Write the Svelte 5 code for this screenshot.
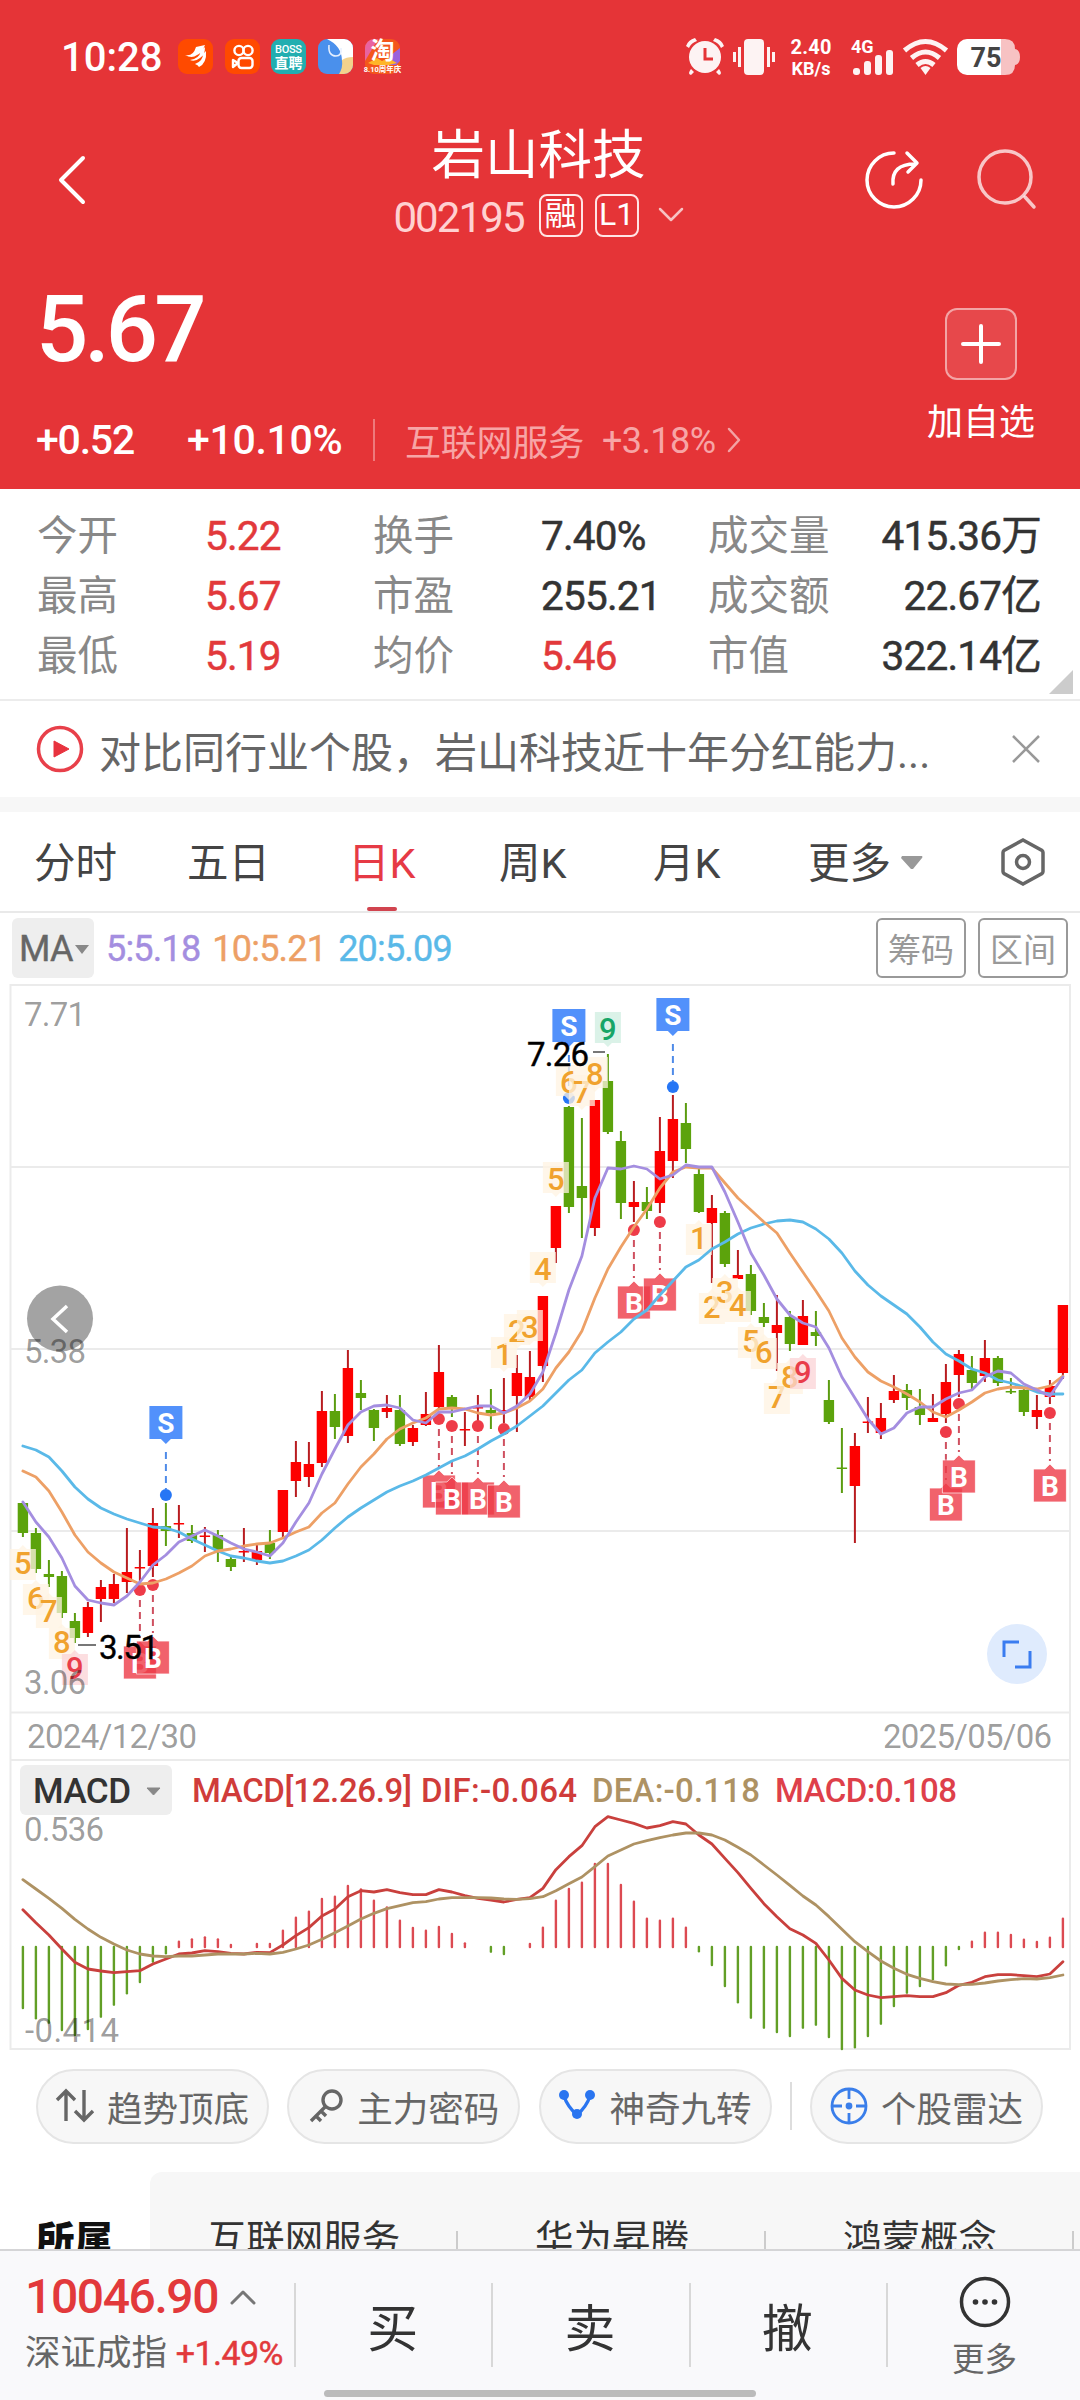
<script lang="ts">
	type Candle = [string, number, number, number, number];

	const stats = [
		['今开', '5.22', '换手', '7.40%', '成交量', '415.36万'],
		['最高', '5.67', '市盈', '255.21', '成交额', '22.67亿'],
		['最低', '5.19', '均价', '5.46', '市值', '322.14亿']
	];

	const tabs = ['分时', '五日', '日K', '周K', '月K', '更多'];
	const concepts = ['互联网服务', '华为昇腾', '鸿蒙概念'];

	// direction, body top, body bottom, wick top, wick bottom
	const candles: Candle[] = [
		['g', 1503, 1533, 1503, 1537], ['g', 1533, 1569, 1528, 1573], ['g', 1574, 1577, 1560, 1587],
		['g', 1576, 1613, 1571, 1618], ['g', 1621, 1638, 1613, 1643], ['r', 1607, 1633, 1602, 1637],
		['r', 1587, 1599, 1580, 1622], ['r', 1584, 1599, 1574, 1603], ['r', 1572, 1582, 1528, 1593],
		['r', 1567, 1568.5, 1550, 1590], ['r', 1523, 1566, 1508, 1577], ['g', 1526, 1531, 1503, 1546],
		['r', 1523, 1524.5, 1505, 1538], ['g', 1533, 1541, 1525, 1543], ['r', 1535.5, 1537, 1527, 1552],
		['g', 1535, 1550, 1530, 1562], ['g', 1559, 1567, 1557, 1571], ['r', 1551, 1552.5, 1528, 1562],
		['r', 1551, 1560, 1543, 1565], ['g', 1543, 1553, 1530, 1559], ['r', 1490, 1532, 1490, 1537],
		['r', 1462, 1481, 1441, 1497], ['r', 1464, 1477, 1442, 1487], ['r', 1411, 1463, 1391, 1467],
		['g', 1411, 1427, 1394, 1439], ['r', 1368, 1436, 1350, 1443], ['g', 1393, 1398, 1380, 1410],
		['g', 1410, 1428, 1409, 1441], ['r', 1408, 1412, 1395, 1418], ['g', 1410, 1444, 1395, 1446],
		['r', 1428, 1442, 1425, 1446], ['r', 1414, 1425, 1392, 1426], ['r', 1372, 1407, 1345, 1410],
		['g', 1397, 1408, 1395, 1417], ['r', 1429, 1430.5, 1412, 1446], ['r', 1407, 1408.5, 1395, 1423],
		['g', 1410, 1413, 1389, 1429], ['r', 1410, 1411.5, 1378, 1423], ['r', 1373, 1396, 1355, 1432],
		['r', 1377, 1397, 1351, 1400], ['r', 1296, 1366, 1296, 1382], ['r', 1206, 1248, 1206, 1263],
		['g', 1107, 1207, 1106, 1213], ['g', 1186, 1198, 1118, 1238], ['r', 1100, 1228, 1100, 1236],
		['g', 1081, 1132, 1054, 1134], ['g', 1141, 1203, 1131, 1219], ['r', 1202, 1207, 1181, 1222],
		['g', 1202, 1211, 1187, 1219], ['r', 1151, 1203, 1117, 1213], ['r', 1119, 1161, 1095, 1178],
		['g', 1123, 1149, 1103, 1163], ['g', 1174, 1212, 1168, 1213], ['r', 1208, 1223, 1195, 1283],
		['g', 1213, 1264, 1211, 1267], ['r', 1275, 1279, 1250, 1279], ['g', 1274, 1311, 1265, 1315],
		['g', 1317, 1323, 1303, 1327], ['r', 1325, 1333, 1295, 1371], ['g', 1317, 1344, 1311, 1351],
		['r', 1316, 1345, 1300, 1345], ['g', 1332, 1336, 1311, 1346], ['g', 1400, 1422, 1380, 1424],
		['g', 1467.5, 1469, 1428, 1493], ['r', 1446, 1486, 1433, 1543], ['r', 1421.5, 1423, 1397, 1433],
		['r', 1418, 1433, 1403, 1439], ['r', 1391, 1400, 1375, 1403], ['g', 1390, 1398, 1384, 1410],
		['g', 1407, 1415, 1389, 1425], ['r', 1418, 1422, 1394, 1422], ['r', 1382, 1414, 1364, 1423],
		['r', 1354, 1375, 1350, 1397], ['g', 1370, 1383, 1356, 1389], ['r', 1358, 1376, 1340, 1382],
		['g', 1358, 1383, 1356, 1386], ['g', 1391, 1392.5, 1378, 1394], ['g', 1390, 1412, 1388, 1416],
		['r', 1410, 1417, 1395, 1429], ['r', 1386, 1397, 1380, 1404], ['r', 1305, 1373, 1305, 1379]
	];

	const ma5 = [
		1502, 1522, 1537, 1558, 1586, 1600, 1603, 1605, 1596, 1582, 1565, 1555, 1542, 1536, 1530, 1536,
		1543, 1549, 1552, 1556, 1543, 1522, 1503, 1474, 1449, 1425, 1412, 1406, 1405, 1408, 1420, 1423,
		1412, 1412, 1409, 1406, 1406, 1413, 1406, 1394, 1372, 1333, 1290, 1256, 1198, 1168, 1169, 1166,
		1169, 1179, 1175, 1165, 1167, 1167, 1192, 1222, 1253, 1275, 1299, 1315, 1323, 1327, 1348, 1377,
		1398, 1419, 1434, 1428, 1413, 1407, 1407, 1399, 1393, 1390, 1377, 1371, 1373, 1384, 1390, 1396,
		1377
	];
	const ma10 = [
		1471, 1477, 1491, 1512, 1535, 1552, 1563, 1572, 1578, 1584, 1583, 1579, 1573, 1566, 1556, 1551,
		1549, 1546, 1544, 1543, 1538, 1532, 1527, 1513, 1503, 1484, 1467, 1454, 1439, 1429, 1423, 1418,
		1409, 1408, 1409, 1413, 1415, 1413, 1408, 1401, 1389, 1368, 1352, 1331, 1298, 1269, 1247, 1227,
		1209, 1188, 1172, 1167, 1168, 1168, 1183, 1198, 1210, 1222, 1233, 1253, 1272, 1291, 1311, 1338,
		1357, 1372, 1381, 1387, 1394, 1402, 1412, 1417, 1410, 1402, 1393, 1389, 1387, 1388, 1389, 1386,
		1376
	];
	const ma20 = [
		1446, 1450, 1457, 1471, 1487, 1499, 1508, 1514, 1519, 1523, 1527, 1528, 1532, 1539, 1545, 1551,
		1556, 1558, 1561, 1563, 1561, 1556, 1550, 1540, 1528, 1517, 1508, 1500, 1492, 1486, 1481, 1475,
		1468, 1461, 1456, 1449, 1441, 1434, 1426, 1416, 1406, 1393, 1380, 1370, 1353, 1342, 1332, 1319,
		1310, 1295, 1281, 1267, 1260, 1249, 1242, 1234, 1228, 1224, 1221, 1220, 1222, 1229, 1239, 1253,
		1271, 1285, 1296, 1305, 1314, 1327, 1342, 1354, 1361, 1369, 1373, 1380, 1383, 1387, 1392, 1394,
		1394
	];

	// nine-turn counters: index, digit, centre y, kind
	const turns: [number, number, number, string][] = [
		[0, 5, 1563, 'o'], [1, 6, 1598, 'o'], [2, 7, 1611, 'o'], [3, 8, 1642, 'o'], [4, 9, 1668, 'r'],
		[37, 1, 1354, 'o'], [38, 2, 1331, 'o'], [39, 3, 1327, 'o'], [40, 4, 1269, 'o'], [41, 5, 1179, 'o'],
		[42, 6, 1082, 'o'], [43, 7, 1092, 'o'], [44, 8, 1074, 'o'], [45, 9, 1029, 'n'],
		[52, 1, 1238, 'o'], [53, 2, 1307, 'o'], [54, 3, 1292, 'o'], [55, 4, 1305, 'o'], [56, 5, 1341, 'o'],
		[57, 6, 1352, 'o'], [58, 7, 1397, 'o'], [59, 8, 1377, 'o'], [60, 9, 1372, 'r']
	];

	const buys = [[9, 1590], [10, 1585], [32, 1419], [33, 1426], [35, 1426], [37, 1429], [47, 1230], [49, 1222], [71, 1432], [72, 1404], [79, 1413]];
	const sells = [[11, 1495], [42, 1098], [50, 1087]];

	const bars = [
		924, 955, 968, 990, 1005, 987, 950, 914, 880, 846, 785, 760, 725, 718, 712, 718, 735, 0, 732, 732,
		692, 653, 635, 597, 590, 558, 568, 602, 622, 662, 684, 692, 681, 702, 730, 0, 755, 762, 0, 732,
		683, 602, 567, 548, 492, 492, 555, 605, 656, 662, 656, 683, 754, 795, 858, 907, 953, 983, 996, 1008,
		983, 974, 1011, 1047, 1042, 1008, 971, 918, 878, 858, 838, 796, 747, 725, 698, 698, 705, 719, 726,
		713, 656
	];
	const dif = [
		629, 668, 705, 747, 787, 807, 813, 818, 815, 812, 792, 777, 762, 759, 752, 755, 760, 762, 757, 758,
		735, 707, 683, 648, 627, 590, 572, 576, 569, 578, 584, 584, 569, 576, 587, 595, 600, 606, 598, 593,
		565, 509, 470, 437, 380, 350, 360, 370, 384, 377, 365, 372, 405, 432, 475, 518, 565, 611, 650, 686,
		705, 730, 780, 835, 870, 885, 893, 890, 887, 890, 890, 878, 856, 847, 830, 824, 824, 827, 830, 822,
		785
	];
	const dea = [
		539, 567, 595, 625, 658, 687, 712, 732, 750, 762, 768, 770, 768, 768, 765, 762, 762, 762, 760, 762,
		757, 747, 735, 718, 698, 678, 657, 640, 626, 617, 608, 605, 597, 593, 593, 593, 594, 597, 598, 596,
		590, 572, 551, 531, 500, 468, 450, 432, 422, 413, 405, 399, 399, 405, 420, 442, 465, 495, 525, 556,
		588, 615, 650, 688, 725, 755, 783, 805, 823, 835, 845, 852, 854, 853, 849, 843, 839, 836, 837, 833,
		825
	];

	const x = (i: number) => 22.9 + 13 * i;
	const my = (v: number) => 1700 + v / 3;
	const line = (ys: number[]) => ys.map((y, i) => `${x(i)},${y}`).join(' ');
	const macdLine = (vs: number[]) => line(vs.map(my));
</script>

<div class="screen">
	<header>
		<div class="status">
			<b class="clock">10:28</b>
			<svg class="apps" width="222" height="36" viewBox="0 0 222 36">
				<rect width="35" height="35" rx="9" fill="#ff4a00" />
				<path d="M7 16q8 2 11-8l9-2q-3 8-8 10-5 4-12 0Z M12 21q9-1 11-9l4-4q0 8-5 11-5 4-10 2Z M17 25q8-3 8-10l3-3q1 12-7 16-1-2-4-3Z" fill="#fff" />
				<rect x="47" width="35" height="35" rx="9" fill="#ff4a00" />
				<g fill="none" stroke="#fff" stroke-width="2.4">
					<circle cx="61" cy="11.500" r="4.600" /><circle cx="70" cy="11.500" r="4.600" />
					<rect x="60.500" y="19" width="14" height="10" rx="3" /><path d="M60 24l-5-3v7Z" stroke-linejoin="round" />
				</g>
				<rect x="93" width="35" height="35" rx="9" fill="#22aeb0" />
				<text x="110.500" y="14" text-anchor="middle" font-size="11" font-weight="500" textLength="27" fill="#fff">BOSS</text>
				<text x="110.500" y="29" text-anchor="middle" font-size="14" font-weight="700" fill="#fff">直聘</text>
				<rect x="140" width="35" height="35" rx="9" fill="#4a90ec" />
				<path d="M149 0h17a9 9 0 0 1 9 9v10q-7 0-11 3 0-15-15-22Z" fill="#fff" />
				<path d="M175 18v8a9 9 0 0 1-9 9h-5q4-6 3-14 4-3 11-3Z" fill="#f3d28c" />
				<path d="M151 6q-1 11 7 11 6 0 5-8" fill="none" stroke="#e6f0ff" stroke-width="1.500" />
				<rect x="187" width="35" height="35" rx="9" fill="#f4561c" />
				<path d="M187 9a9 9 0 0 1 9-9h4l-13 22Z" fill="#e864a1" /><path d="M213 16l9-7v13l-4 4h-12Z" fill="#9a63dc" />
				<path d="M190 24l9-5 5 3 6-3 9 5-8 2h-15Z" fill="#ffb629" />
				<text x="204.500" y="20" text-anchor="middle" font-size="24" font-weight="700" fill="#fff">淘</text>
				<text x="204.500" y="33" text-anchor="middle" font-size="7.500" font-weight="700" fill="#fff">8.10周年庆</text>
			</svg>
			<svg class="signals" width="336" height="40" viewBox="686 37 336 40">
				<g fill="#fff" opacity=".94">
					<circle cx="705" cy="57" r="16" />
					<path d="M686 46q2-6 9-8l2 3q-6 2-8 7Z M724 46q-2-6-9-8l-2 3q6 2 8 7Z M691 69l3 3-3 3q-4-1 0-6Z M719 69l-3 3 3 3q4-1 0-6Z" />
					<rect x="744" y="39" width="20" height="36" rx="4" />
					<path d="M733 52h3v10h-3Z M738 47h3v20h-3Z M767 47h3v20h-3Z M772 52h3v10h-3Z" />
					<rect x="853" y="68" width="7" height="7" rx="3" /><rect x="864" y="61" width="7" height="14" rx="3" />
					<rect x="875" y="55" width="7" height="20" rx="3" /><rect x="886" y="50" width="7" height="25" rx="3" />
					<path d="M925.500 75l-5-7q5-4 10 0Z" />
				</g>
				<path d="M705 48v11h8" fill="none" stroke="#e53437" stroke-width="3" />
				<g fill="none" stroke="#fff" stroke-width="5" opacity=".94">
					<path d="M904.500 50.500q21-18 42 0M911.500 58q14-12 28 0M917 65q8.500-7 17 0" />
				</g>
				<g fill="#fff" font-size="20" font-weight="700">
					<text x="811" y="54" text-anchor="middle" textLength="41">2.40</text>
					<text x="811" y="75" text-anchor="middle" font-size="18">KB/s</text>
					<text x="851" y="53" font-size="18">4G</text>
				</g>
				<path d="M967 39h34v36h-34a10 10 0 0 1-10-10V49a10 10 0 0 1 10-10Z" fill="#fff" />
				<path d="M1001 39h4q10 0 10 10 5 1 5 8t-5 8q0 10-10 10h-4Z" fill="#fff" opacity=".7" />
				<text x="986" y="66.500" text-anchor="middle" font-size="27" font-weight="700" fill="#444">75</text>
			</svg>
		</div>

		<nav>
			<svg class="back" width="30" height="52" viewBox="0 0 30 52"><path d="M26 4 4 26l22 22" /></svg>
			<div class="name">
				<h1>岩山科技</h1>
				<p>
					<span class="code">002195</span><i>融</i><i>L1</i>
					<svg width="26" height="16" viewBox="0 0 26 16"><path d="M2 2l11 11L24 2" /></svg>
				</p>
			</div>
			<svg class="nav-icons" width="176" height="64" viewBox="862 148 176 64">
				<path d="M894 153a27 27 0 1 0 27 27M893 184c-1-13 6-20 22-20M907 153l10 10-9 9" />
				<circle cx="1005" cy="177" r="26" opacity=".72" /><path d="M1025 197l9 10" opacity=".72" />
			</svg>
		</nav>

		<div class="quote">
			<div>
				<strong class="price">5.67</strong>
				<div class="change">
					<b>+0.52</b><b>+10.10%</b>
					<div class="sector">互联网服务 <span>+3.18%</span>
						<svg width="14" height="26" viewBox="0 0 14 26"><path d="M2 2l10 11L2 24" /></svg>
					</div>
				</div>
			</div>
			<div class="watch">
				<button aria-label="加自选"><svg width="36" height="36" viewBox="0 0 36 36"><path d="M18 0v36M0 18h36" /></svg></button>
				<span>加自选</span>
			</div>
		</div>
	</header>

	<section class="stats">
		{#each stats as row, r}
			{#each row as cell, c}
				<span class:value={c % 2 === 1} class:up={c === 1 || (r === 2 && c === 3)}>{cell}</span>
			{/each}
		{/each}
		<svg class="corner" width="24" height="24"><path d="M24 0v24H0Z" fill="#ccc" /></svg>
	</section>

	<section class="notice">
		<svg width="48" height="48" viewBox="0 0 48 48">
			<circle cx="24" cy="24" r="21.500" fill="none" stroke="#e8404a" stroke-width="3.500" />
			<path d="M18 16v16l15-8Z" fill="#e8333e" stroke="#e8333e" stroke-linejoin="round" />
		</svg>
		<p>对比同行业个股，岩山科技近十年分红能力...</p>
		<svg width="28" height="28" viewBox="0 0 28 28"><path d="M1 1l26 26M27 1 1 27" stroke="#999" stroke-width="2.500" /></svg>
	</section>

	<section class="tabs">
		{#each tabs as tab}
			<span class:active={tab === '日K'}>{tab}</span>
		{/each}
		<svg class="caret" width="22" height="14"><path d="M1 0h20q1 1 0 2L12 13h-2L0 2Z" fill="#999" /></svg>
		<svg class="gear" width="44" height="48" viewBox="0 0 44 48">
			<path d="M22 2 41 12.500q1 1 1 2v19q0 1-1 2L22 46 3 35.500q-1-1-1-2v-19q0-1 1-2Z" /><circle cx="22" cy="24" r="6.500" />
		</svg>
	</section>

	<section class="ma">
		<span class="pill">MA<svg width="14" height="9"><path d="M0 0h14L7 9Z" fill="#888" /></svg></span>
		<span class="m5">5:5.18</span><span class="m10">10:5.21</span><span class="m20">20:5.09</span>
		<button>筹码</button><button>区间</button>
	</section>

	<div class="chart">
		<svg width="1080" height="1080" viewBox="0 983 1080 1080">
			<g stroke="#ebebeb" stroke-width="2" fill="none">
				<rect x="10.500" y="985" width="1059.500" height="1064" />
				<path d="M10 1167H1070M10 1349H1070M10 1531H1070M10 1712.500H1070M10 1760H1070" />
			</g>

			<circle cx="60" cy="1318.500" r="33" fill="#a3a3a3" />
			<path d="M67 1306l-14 13 14 13" fill="none" stroke="#fff" stroke-width="3.500" />

			{#each candles as [dir, top, bottom, high, low], i}
				<path class="wick {dir}" d="M{x(i)} {high}V{low}" />
				<rect class="body {dir}" x={x(i) - 5.2} y={top} width="10.4" height={bottom - top} />
			{/each}

			{#each sells as [i, y]}
				<g transform="translate({x(i)} {y})">
					<path d="M0 -43V-6" stroke="#4f8be8" stroke-width="2" stroke-dasharray="7 5" />
					<circle r="6" fill="#2676f5" />
					<path d="M-16.500 -89h33v33H5l-5 5-5-5h-11.500Z" fill="#5291fb" />
					<text class="flag" y="-62">S</text>
				</g>
			{/each}

			{#each turns as [i, digit, y, kind]}
				<g transform="translate({x(i)} {y})" class="turn {kind}">
					<path d={kind === 'r' || y > 1200 && i > 50 || i < 5 ? 'M-13 -14h9l4-4 4 4h9v31h-26Z' : 'M-13 -17h26v31H4l-4 4-4-4h-9Z'} />
					<text y="11">{digit}</text>
				</g>
			{/each}

			{#each buys as [i, y]}
				<g transform="translate({x(i)} {y})">
					<path d="M0 10V48" stroke="#cf5060" stroke-width="2" stroke-dasharray="7 5" />
					<circle r="6" fill="#ee3b48" />
					<path d="M-16.500 56H-5l5-5 5 5h11.500v33h-33Z" fill="#ee3b48" stroke="#fff" stroke-width=".8" opacity=".8" />
					<text class="flag" y="83">B</text>
				</g>
			{/each}

			<g class="lines">
				<polyline points={line(ma20)} stroke="#5ab9e8" />
				<polyline points={line(ma10)} stroke="#eda066" />
				<polyline points={line(ma5)} stroke="#a48ee0" />
			</g>

			<path d="M593 1052h12M78 1645h18" stroke="#777" stroke-width="2" />
			<text class="peak" x="527" y="1066" textLength="62">7.26</text>
			<text class="peak" x="99" y="1659" textLength="60">3.51</text>

			<circle cx="1017" cy="1654" r="30" fill="#dfebfd" />
			<path d="M1004 1657v-15h15M1030 1651v16h-15" fill="none" stroke="#3a7cf0" stroke-width="3" />

			{#each bars as v, i}
				{#if v}
					<path d="M{x(i)} 1947V{my(v)}" stroke={v > 742 ? '#629f26' : '#dc4a52'} stroke-width="2.400" stroke-linecap="round" />
				{/if}
			{/each}
			<g class="lines">
				<polyline points={macdLine(dif)} stroke="#c9403d" />
				<polyline points={macdLine(dea)} stroke="#ae9263" />
			</g>

			<rect x="20" y="1765" width="152" height="50" rx="6" fill="#eee" />
			<text x="33" y="1803" textLength="98" font-size="35" font-weight="500" fill="#333">MACD</text>
			<path d="M147 1788h13l-6.500 7Z" fill="#888" stroke="#888" stroke-linejoin="round" />
			<g class="legend">
				<text x="192" y="1802" textLength="220" fill="#d03c3a">MACD[12.26.9]</text>
				<text x="421" y="1802" textLength="156" fill="#d03c3a">DIF:-0.064</text>
				<text x="592" y="1802" textLength="168" fill="#ae9263">DEA:-0.118</text>
				<text x="775" y="1802" textLength="182" fill="#de404a">MACD:0.108</text>
			</g>
			<g class="axis">
				<text x="24" y="1026" textLength="62">7.71</text>
				<text x="24" y="1363" textLength="62">5.38</text>
				<text x="24" y="1694" textLength="62">3.06</text>
				<text x="27" y="1748" textLength="170">2024/12/30</text>
				<text x="883" y="1748" textLength="169">2025/05/06</text>
				<text x="24" y="1841" textLength="80">0.536</text>
				<text x="25" y="2042" textLength="94">-0.414</text>
			</g>
		</svg>
	</div>

	<section class="chips">
		<span>
			<svg width="38" height="34" viewBox="0 0 38 34" stroke="#666" stroke-width="3.400"><path d="M10 32V3M1 11l9-9 9 9M28 1v30M19 22l9 9 9-9" /></svg>趋势顶底
		</span>
		<span>
			<svg width="36" height="36" viewBox="0 0 36 36" stroke="#666" stroke-width="3.400"><circle cx="24" cy="12" r="9" /><path d="M18 18 3 33M8 28l5 5M13 23l5 5" /></svg>主力密码
		</span>
		<span>
			<svg width="38" height="34" viewBox="0 0 38 34" stroke="#2a75f0" stroke-width="3.200"><path d="M6 7q3 10 13 19Q29 17 32 7" /><g fill="#2a75f0" stroke="none"><circle cx="6" cy="6" r="5" /><circle cx="32" cy="6" r="5" /><circle cx="19" cy="25" r="5" /></g></svg>神奇九转
		</span>
		<hr />
		<span>
			<svg width="38" height="38" viewBox="0 0 38 38" stroke="#3a7eea" stroke-width="2.800"><circle cx="19" cy="19" r="17" /><path d="M19 2v10M19 26v10M2 19h10M26 19h10" /><circle cx="19" cy="19" r="2" fill="#3a7eea" /></svg>个股雷达
		</span>
	</section>

	<section class="belongs">
		<b>所属</b>
		<div>
			{#each concepts as concept}
				<span>{concept}</span>
			{/each}
		</div>
	</section>

	<footer>
		<div class="index">
			<p class="points">10046.90 <svg width="26" height="15" viewBox="0 0 26 15"><path d="M2 13 13 2l11 11" /></svg></p>
			<p>深证成指 <em>+1.49%</em></p>
		</div>
		<span>买</span>
		<span>卖</span>
		<span>撤</span>
		<div class="more">
			<svg width="52" height="52" viewBox="0 0 52 52">
				<circle cx="26" cy="26" r="23.500" fill="none" stroke="#333" stroke-width="3.500" />
				<g fill="#333"><circle cx="16.500" cy="26" r="2.800" /><circle cx="26" cy="26" r="2.800" /><circle cx="35.500" cy="26" r="2.800" /></g>
			</svg>
			更多
		</div>
		<i class="home"></i>
	</footer>
</div>

<style>
	:global(body) {
		margin: 0;
		background: #fff;
	}

	.screen {
		width: 1080px;
		height: 2400px;
		overflow: hidden;
		display: flex;
		flex-direction: column;
		font-family: Roboto, 'Noto Sans CJK SC', sans-serif;
		color: #333;
		background: #fff;
	}

	.screen * {
		box-sizing: border-box;
	}

	.screen > * {
		flex-shrink: 0;
	}

	h1,
	p {
		margin: 0;
		font-weight: 400;
	}

	button {
		font: inherit;
		padding: 0;
	}

	svg {
		display: block;
		fill: none;
		flex-shrink: 0;
		overflow: visible;
	}

	header {
		height: 489px;
		background: #e53437;
		color: #fff;
	}

	.status {
		display: flex;
		align-items: center;
		height: 114px;
		padding: 0 58px 0 61px;
	}

	.clock {
		width: 117px;
		font-size: 40px;
		font-weight: 500;
	}

	.signals {
		margin-left: auto;
	}

	nav {
		display: flex;
		height: 136px;
		padding: 0 42px 0 57px;
		position: relative;
		justify-content: space-between;
	}

	nav svg,
	.sector svg,
	.watch svg,
	.index svg {
		stroke: #fff;
		stroke-width: 3;
		stroke-linecap: round;
		stroke-linejoin: round;
	}

	.back {
		margin-top: 40px;
		stroke-width: 4;
	}

	.name {
		width: 300px;
		margin-left: 128px;
	}

	.name h1 {
		font-size: 53.5px;
		line-height: 84px;
		text-align: center;
		white-space: nowrap;
	}

	.name p {
		display: flex;
		align-items: center;
		justify-content: center;
		height: 34px;
	}

	.name p svg {
		margin-left: 19px;
		opacity: 0.7;
		stroke-width: 2.5;
	}

	.code {
		font-size: 42px;
		letter-spacing: -1.9px;
		color: #ffd1d1;
		margin: 4px 3px 0 0;
	}

	.name i {
		width: 44px;
		height: 43px;
		margin-left: 12px;
		border: 2.5px solid #ffe5e5;
		border-radius: 8px;
		font-size: 32px;
		line-height: 37px;
		text-align: center;
		font-style: normal;
	}

	.nav-icons {
		margin-top: 34px;
		stroke-width: 3.5;
	}

	.quote {
		display: flex;
		justify-content: space-between;
		padding: 25px 45px 0 36px;
	}

	.price {
		display: block;
		font-size: 92px;
		font-weight: 500;
		letter-spacing: -4px;
		line-height: 110px;
	}

	.change {
		display: flex;
		align-items: center;
		height: 44px;
		margin-top: 33px;
		font-size: 41px;
		letter-spacing: -1.2px;
	}

	.change b {
		font-weight: 500;
		width: 151px;
	}

	.change b + b {
		width: 186px;
		letter-spacing: -0.3px;
	}

	.sector {
		display: flex;
		align-items: center;
		border-left: 2px solid rgba(255, 255, 255, 0.35);
		padding-left: 30px;
		height: 42px;
		font-size: 36px;
		letter-spacing: -0.2px;
		color: #f7a5a6;
	}

	.sector span {
		margin: 2px 12px 0 18px;
		letter-spacing: -0.6px;
	}

	.sector svg {
		opacity: 0.55;
		stroke-width: 2.5;
	}

	.watch {
		display: flex;
		flex-direction: column;
		align-items: center;
		padding-top: 33px;
		font-size: 36px;
		line-height: 50px;
	}

	.watch button {
		display: grid;
		place-items: center;
		width: 72px;
		height: 72px;
		margin-bottom: 18px;
		background: rgba(255, 255, 255, 0.1);
		border: 2px solid rgba(255, 255, 255, 0.5);
		border-radius: 12px;
	}

	.watch svg {
		stroke-width: 4;
	}

	.stats {
		position: relative;
		display: grid;
		grid-template-columns: 168px 168px 168px 167px 121px 1fr;
		grid-auto-rows: 60px;
		height: 212px;
		padding: 17px 39px 0 37px;
		border-bottom: 2px solid #ececec;
		font-size: 40.5px;
		line-height: 60px;
		color: #888;
		white-space: nowrap;
	}

	.stats .value {
		color: #333;
		letter-spacing: -0.8px;
		-webkit-text-stroke: 0.5px currentColor;
	}

	.stats .value:nth-child(6n) {
		text-align: right;
	}

	.stats .value.up {
		color: #e2393b;
	}

	.corner {
		position: absolute;
		right: 7px;
		bottom: 5px;
	}

	.notice {
		display: flex;
		align-items: center;
		height: 111px;
		padding: 0 40px 0 36px;
		border-bottom: 15px solid #f7f7f7;
		font-size: 42px;
		line-height: 60px;
		color: #666;
	}

	.notice p {
		margin: 9px auto 0 15px;
		white-space: nowrap;
	}

	.tabs {
		display: grid;
		grid-template-columns: 153px 161px 151px 154px 155px 93px 22px 1fr;
		align-items: center;
		height: 101px;
		padding: 0 35px 0 34px;
		border-bottom: 2px solid #e9e9e9;
		font-size: 41.5px;
		color: #444;
	}

	.tabs span {
		position: relative;
		line-height: 98px;
		height: 99px;
		padding-top: 3px;
	}

	.tabs .active {
		color: #e63a45;
	}

	.active::after {
		content: '';
		position: absolute;
		left: 19px;
		bottom: 0;
		width: 30px;
		height: 4px;
		border-radius: 2px;
		background: #d1444f;
	}

	.caret {
		margin-top: 3px;
	}

	.gear {
		justify-self: end;
		stroke: #666;
		stroke-width: 3.5;
	}

	.ma {
		display: flex;
		align-items: center;
		height: 70px;
		padding: 0 12px;
		gap: 12px;
		font-size: 36px;
		letter-spacing: -0.8px;
	}

	.ma span {
		padding-top: 2px;
		-webkit-text-stroke: 0.4px currentColor;
	}

	.ma .pill {
		display: flex;
		align-items: center;
		width: 82px;
		height: 60px;
		padding-left: 7px;
		border-radius: 6px;
		background: #eee;
		color: #666;
	}

	.pill svg {
		margin-left: 2px;
	}

	.m5 {
		color: #a48ee0;
	}

	.m10 {
		color: #eda066;
	}

	.m20 {
		color: #5ab9e8;
	}

	.ma button {
		width: 90px;
		height: 60px;
		border: 2px solid #999;
		border-radius: 6px;
		background: #fff;
		color: #999;
		font-size: 33px;
	}

	.m20 + button {
		margin-left: auto;
	}

	.chart {
		height: 1080px;
	}

	.axis {
		font-size: 33px;
		fill: rgba(0, 0, 0, 0.4);
	}

	.wick {
		stroke-width: 2;
	}

	.wick.r {
		stroke: #b81c20;
	}

	.wick.g {
		stroke: #5b9c10;
	}

	.body.r {
		fill: #fd0000;
	}

	.body.g {
		fill: #5ca30c;
	}

	.flag {
		font-size: 28px;
		font-weight: 700;
		fill: #fff;
		text-anchor: middle;
	}

	.turn text {
		font-size: 31px;
		font-weight: 500;
		text-anchor: middle;
		fill: #f0a22e;
	}

	.turn path {
		fill: #fff3e2;
		opacity: 0.75;
	}

	.turn.r text {
		fill: #e93d4a;
	}

	.turn.r path {
		fill: #fbd3d6;
	}

	.turn.n text {
		fill: #17a567;
	}

	.turn.n path {
		fill: #cfeee0;
	}

	.lines {
		fill: none;
		stroke-width: 2.8;
		stroke-linejoin: round;
		stroke-linecap: round;
	}

	.peak {
		font-size: 33px;
		fill: #000;
		stroke: #000;
		stroke-width: 0.4;
	}

	.legend {
		font-size: 33px;
		font-weight: 500;
	}

	.chips {
		display: flex;
		align-items: center;
		justify-content: space-between;
		height: 86px;
		padding: 0 37px 0 36px;
		font-size: 35.5px;
		color: #666;
	}

	.chips span {
		display: flex;
		align-items: center;
		justify-content: center;
		gap: 13px;
		width: 233px;
		height: 75px;
		border: 2px solid #e5e5e5;
		border-radius: 38px;
		background: #f7f7f7;
		white-space: nowrap;
	}

	.chips hr {
		width: 2px;
		height: 48px;
		margin: 0;
		border: 0;
		background: #ddd;
	}

	.belongs {
		display: flex;
		height: 77px;
		margin-top: 23px;
		overflow: hidden;
		font-size: 38.5px;
		line-height: 56px;
	}

	.belongs b {
		width: 150px;
		padding: 41px 0 0 36px;
		font-weight: 900;
		color: #111;
	}

	.belongs div {
		display: flex;
		flex: 1;
		background: #f7f7f7;
		border-top-left-radius: 12px;
	}

	.belongs div span {
		flex: 0 0 308px;
		padding-top: 40px;
		text-align: center;
		background: linear-gradient(#ccc, #ccc) right 59px / 2px 60px no-repeat;
	}

	footer {
		position: relative;
		display: flex;
		height: 151px;
		border-top: 2px solid #d5d5d7;
		background: #f9f9fb;
	}

	.index {
		flex: 0 0 294px;
		padding: 18px 0 0 25px;
		font-size: 35.5px;
		line-height: 56px;
		color: #666;
		white-space: nowrap;
	}

	.index .points {
		display: flex;
		align-items: center;
		height: 56px;
		font-size: 48px;
		font-weight: 500;
		letter-spacing: -1.4px;
		color: #e2393b;
	}

	.index svg {
		margin-left: 12px;
		stroke: #777;
	}

	.index em {
		font-size: 34px;
		font-style: normal;
		letter-spacing: -0.6px;
		color: #e2393b;
		-webkit-text-stroke: 0.5px currentColor;
	}

	footer > span,
	.more {
		flex: 0 0 197.3px;
		padding-top: 4px;
		line-height: 149px;
		text-align: center;
		font-size: 51px;
		background: linear-gradient(#d8d8d8, #d8d8d8) left 32px / 2px 84px no-repeat;
	}

	.more {
		display: flex;
		flex-direction: column;
		align-items: center;
		padding-top: 25px;
		font-size: 32.5px;
		line-height: 65px;
		color: #666;
	}

	.home {
		position: absolute;
		left: 324px;
		bottom: 3px;
		width: 432px;
		height: 7px;
		border-radius: 4px;
		background: #bbb;
	}
</style>
